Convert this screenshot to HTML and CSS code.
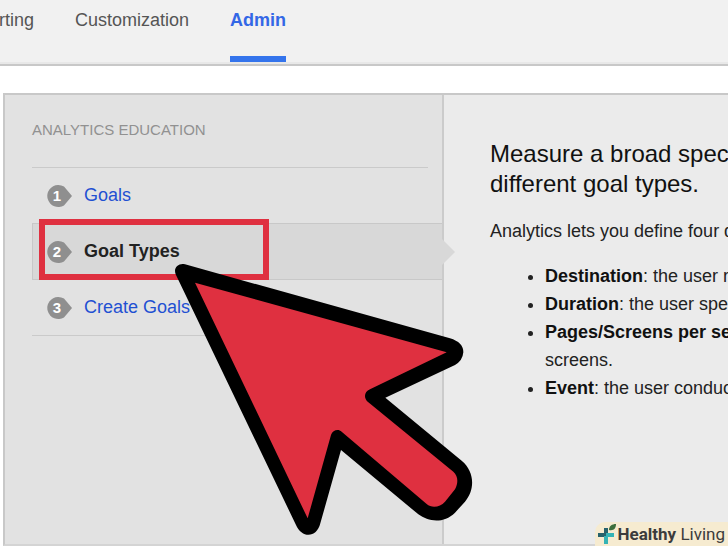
FILE: index.html
```html
<!DOCTYPE html>
<html lang="en">
<head>
    <meta charset="UTF-8">
    <meta name="viewport" content="width=device-width, initial-scale=1.0">
    <title>Analytics Education</title>
    <link rel="stylesheet" href="styles.css">
</head>

<body>

<header>
    <nav class="main-nav">
        <a href="#">Reporting</a>
        <a href="#">Customization</a>
        <a href="#" class="active">Admin</a>
    </nav>
</header>

<main class="panel">
    <aside class="sidebar">
        <h2>ANALYTICS EDUCATION</h2>
        <ul class="steps">
            <li>
                <a href="#">
                    <svg class="badge" viewBox="0 0 26 24"><path d="M12 1a11 11 0 1 0 6 20.400L26 12l-8-9.400A11 11 0 0 0 12 1z"/><text x="11" y="17">1</text></svg>
                    Goals
                </a>
            </li>
            <li class="current">
                <a href="#">
                    <svg class="badge" viewBox="0 0 26 24"><path d="M12 1a11 11 0 1 0 6 20.400L26 12l-8-9.400A11 11 0 0 0 12 1z"/><text x="11" y="17">2</text></svg>
                    Goal Types
                </a>
                <svg class="pointer" viewBox="0 0 14 26"><path d="M0 0l13 13L0 26z"/></svg>
            </li>
            <li>
                <a href="#">
                    <svg class="badge" viewBox="0 0 26 24"><path d="M12 1a11 11 0 1 0 6 20.400L26 12l-8-9.400A11 11 0 0 0 12 1z"/><text x="11" y="17">3</text></svg>
                    Create Goals
                </a>
            </li>
        </ul>
    </aside>

    <section class="content">
        <h1>Measure a broad spectrum<br>different goal types.</h1>
        <p>Analytics lets you define four different</p>
        <ul>
            <li><b>Destination</b>: the user reaches</li>
            <li><b>Duration</b>: the user spends</li>
            <li><b>Pages/Screens per session</b><br>screens.</li>
            <li><b>Event</b>: the user conducts</li>
        </ul>
    </section>
</main>

<!-- Annotations over the page -->
<div class="highlight"></div>

<svg class="cursor" viewBox="0 0 960 888">
    <path d="M75 43L870 265Q910 277 910 307Q908 332 885 345L676 443L905 632C945 665 945 720 915 755L885 788C850 822 805 815 775 793L543 600L481 820C470 865 425 865 408 825L48 75C38 55 55 38 75 43z"/>
    <path class="cursor-fill" d="M105 98L860 307L630 418C612 425 610 445 625 457L880 665C895 678 895 700 885 718L855 755C840 772 815 775 800 762L545 545C535 536 518 540 513 555L443 805z"/>
</svg>

<div class="watermark">
    <svg viewBox="0 0 20 22">
        <path class="leaf" d="M12 7c0-4 3-6 7-6 0 4-2 7-7 6z"/>
        <path class="cross-dark" d="M7 5h4v7H7zM1 10h8v4H1z"/>
        <path class="cross" d="M7 13h4v8H7zM9 10h8v4H9z"/>
    </svg>
    <span><b>Healthy</b> Living</span>
</div>

</body>
</html>
```
FILE: styles.css
```css
/* General Styles */
* {
    box-sizing: border-box;
}

body {
    font-family: "Liberation Sans", Arial, sans-serif;
    font-size: 18px;
    margin: 0;
    min-height: 100vh;
    display: flex;
    flex-direction: column;
    background-color: white;
    position: relative;
    overflow: hidden;
}

/* Top navigation */
header {
    background-color: #f1f1f1;
    border-bottom: 2px solid #c8c8c8;
}

.main-nav {
    display: flex;
    gap: 41px;
    margin-left: -44px;
    border-bottom: 2px solid #e8e8e8;
}

.main-nav a {
    height: 62px;
    padding-top: 10px;
    line-height: 20px;
    color: #555;
    text-decoration: none;
}

.main-nav .active {
    color: #3367e6;
    font-weight: bold;
    border-bottom: 6px solid #3474ec;
}

/* Panel */
.panel {
    flex: 1;
    display: flex;
    margin: 27px 0 0 3px;
    border: 2px solid #c8c8c8;
    border-right: none;
    border-bottom-color: #d4d4d4;
    background-color: #ebebeb;
}

.sidebar {
    flex: 0 0 439px;
    padding: 24px 14px 24px 27px;
    background-color: #e2e2e2;
    border-right: 2px solid #cbcbcb;
}

.sidebar h2 {
    margin: 0 0 26px;
    font-size: 15px;
    line-height: 22px;
    font-weight: normal;
    color: #919191;
}

.steps {
    list-style: none;
    margin: 0;
    padding: 0;
    border-top: 1px solid #cacaca;
    border-bottom: 1px solid #cacaca;
}

.steps li {
    position: relative;
}

.steps a {
    display: flex;
    align-items: center;
    gap: 12px;
    height: 55px;
    padding-left: 14px;
    color: #1f50d2;
    text-decoration: none;
}

.steps .current {
    margin-right: -14px;
    background-color: #d8d8d8;
    border: 1px solid #c8c8c8;
    border-right: none;
}

.current a {
    padding-left: 13px;
    color: #222;
    font-weight: bold;
}

.badge {
    width: 26px;
    height: 24px;
    fill: #8f8f8f;
}

.badge text {
    fill: white;
    font-size: 15px;
    font-weight: bold;
    text-anchor: middle;
}

.pointer {
    position: absolute;
    left: 100%;
    top: 15px;
    width: 14px;
    height: 26px;
    fill: #d8d8d8;
}

/* Content */
.content {
    flex: 1;
    min-width: 0;
    padding: 44px 0 24px 46px;
    line-height: 28px;
    color: #222;
    white-space: nowrap;
    overflow: hidden;
}

.content h1 {
    margin: 0 0 18px;
    font-size: 24px;
    line-height: 30px;
    font-weight: normal;
    color: #111;
}

.content p {
    margin: 0 0 17px;
}

.content ul {
    margin: 0;
    padding-left: 55px;
}

.content b {
    color: #111;
}

/* Annotations */
.highlight {
    position: absolute;
    left: 39px;
    top: 219px;
    width: 230px;
    height: 61px;
    border: 6px solid #df3040;
}

.cursor {
    position: absolute;
    left: 160px;
    top: 250px;
    width: 320px;
    height: 296px;
}

.cursor-fill {
    fill: #df3040;
}

.watermark {
    position: absolute;
    right: 0;
    bottom: 0;
    display: flex;
    align-items: center;
    gap: 1px;
    height: 24px;
    padding: 0 3px 0 2px;
    border-radius: 10px 0 0 0;
    background-color: #f6ebd0;
    color: #3c3c3c;
    font-family: Roboto, sans-serif;
    font-size: 17px;
}

.watermark svg {
    width: 20px;
    height: 22px;
}

.leaf {
    fill: #3c6e3c;
}

.cross {
    fill: #35b3b5;
}

.cross-dark {
    fill: #26626c;
}
```
